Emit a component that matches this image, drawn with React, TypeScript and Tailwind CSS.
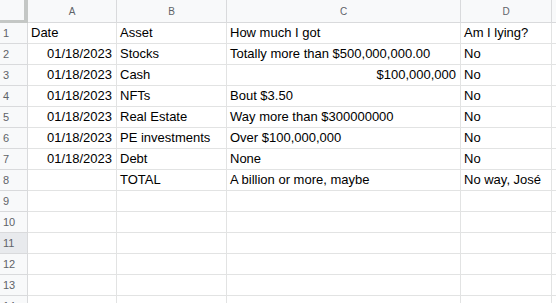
const COLS = [
  { key: 'A', w: 'w-[89px]' },
  { key: 'B', w: 'w-[110px]' },
  { key: 'C', w: 'w-[234px]' },
  { key: 'D', w: 'w-[91px]' },
];

type Cell = { text: string; right?: boolean };

const ROWS: Cell[][] = [
  [{ text: 'Date' }, { text: 'Asset' }, { text: 'How much I got' }, { text: 'Am I lying?' }],
  [{ text: '01/18/2023', right: true }, { text: 'Stocks' }, { text: 'Totally more than $500,000,000.00' }, { text: 'No' }],
  [{ text: '01/18/2023', right: true }, { text: 'Cash' }, { text: '$100,000,000', right: true }, { text: 'No' }],
  [{ text: '01/18/2023', right: true }, { text: 'NFTs' }, { text: 'Bout $3.50' }, { text: 'No' }],
  [{ text: '01/18/2023', right: true }, { text: 'Real Estate' }, { text: 'Way more than $300000000' }, { text: 'No' }],
  [{ text: '01/18/2023', right: true }, { text: 'PE investments' }, { text: 'Over $100,000,000' }, { text: 'No' }],
  [{ text: '01/18/2023', right: true }, { text: 'Debt' }, { text: 'None' }, { text: 'No' }],
  [{ text: '' }, { text: 'TOTAL' }, { text: 'A billion or more, maybe' }, { text: 'No way, José' }],
];

const TOTAL_ROWS = 14;

export default function App() {
  return (
    <div className="w-[556px] h-[303px] overflow-hidden bg-white font-['Liberation_Sans',Arial,sans-serif]">
      {/* column headers */}
      <div className="flex h-[23px]">
        <div className="w-[28px] shrink-0 bg-[#f8f9fa] border-r-4 border-b-[3px] border-[#c4c7c5]" />
        {COLS.map((c) => (
          <div
            key={c.key}
            className={`${c.w} shrink-0 bg-[#f8f9fa] border-r border-b border-[#d9dadc] flex items-center justify-center text-[10px] text-[#5f6368]`}
          >
            {c.key}
          </div>
        ))}
        <div className="flex-1 bg-[#f8f9fa] border-b border-[#d9dadc]" />
      </div>

      {/* rows */}
      {Array.from({ length: TOTAL_ROWS }, (_, i) => {
        const cells = ROWS[i];
        const active = i === 10;
        return (
          <div key={i} className="flex h-[21px]">
            <div
              className={`w-[28px] shrink-0 border-r border-b border-[#d9dadc] flex items-center pl-[3px] text-[11px] text-[#5f6368] ${
                active ? 'bg-[#e8eaed]' : 'bg-[#f8f9fa]'
              }`}
            >
              {i + 1}
            </div>
            {COLS.map((c, j) => {
              const cell = cells?.[j];
              return (
                <div
                  key={c.key}
                  className={`${c.w} shrink-0 border-r border-b border-[#e2e3e3] flex items-center px-[3px] text-[13px] text-black whitespace-nowrap overflow-hidden ${
                    cell?.right ? 'justify-end pr-[4px]' : ''
                  }`}
                >
                  {cell?.text}
                </div>
              );
            })}
            <div className="flex-1 border-b border-[#e2e3e3]" />
          </div>
        );
      })}
    </div>
  );
}
